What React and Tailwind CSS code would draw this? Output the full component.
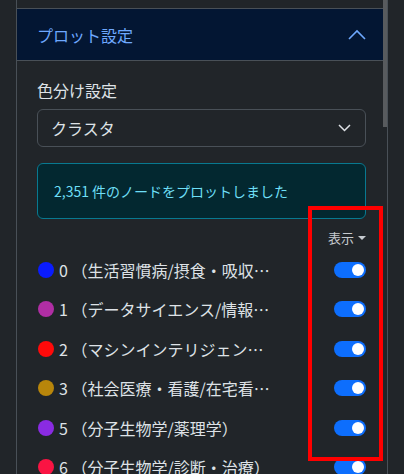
const clusters = [
  { id: 0, color: "#0a1cff", label: "0 （生活習慣病/摂食・吸収…" },
  { id: 1, color: "#b02ea4", label: "1 （データサイエンス/情報…" },
  { id: 2, color: "#ff0a0a", label: "2 （マシンインテリジェン…" },
  { id: 3, color: "#b8860b", label: "3 （社会医療・看護/在宅看…" },
  { id: 5, color: "#8a2be2", label: "5 （分子生物学/薬理学）" },
  { id: 6, color: "#fa1443", label: "6 （分子生物学/診断・治療）" },
];

function Toggle() {
  return (
    <span className="flex h-4 w-8 items-center justify-end rounded-full bg-[#0d6efd] pr-[2px]">
      <span className="h-3 w-3 rounded-full bg-white" />
    </span>
  );
}

export default function App() {
  return (
    <div
      className="relative flex h-[474px] w-[404px] overflow-hidden bg-[#212529] text-[#dee2e6]"
      style={{ fontFamily: '"Noto Sans CJK JP", "Noto Sans", sans-serif' }}
    >
      <div className="w-4 shrink-0" />
      <div className="flex w-[372px] shrink-0 border-x border-[#495057]">
        <div className="w-[366px] shrink-0">
          <div className="h-2" />
          <div className="border-y border-[#495057]">
            <div className="flex h-[51px] items-center justify-between bg-[#031633] pl-5 pr-[17px]">
              <span className="text-base text-[#6ea8fe]">プロット設定</span>
              <svg width="18" height="11" viewBox="0 0 18 11" fill="none">
                <polyline points="1,10 9,2 17,10" stroke="#6ea8fe" strokeWidth="1.6" />
              </svg>
            </div>
          </div>

          <div className="pl-5 pr-[17px] pt-[17px]">
            <div className="mb-[7px] h-6 text-base leading-6">色分け設定</div>
            <div className="flex h-[38px] items-center justify-between rounded-md border border-[#495057] pl-[13px] pr-[14px]">
              <span className="text-base">クラスタ</span>
              <svg width="13" height="8" viewBox="0 0 13 8" fill="none">
                <polyline points="1,1 6.5,6.5 12,1" stroke="#dee2e6" strokeWidth="1.5" />
              </svg>
            </div>

            <div className="mt-4 flex h-14 items-center rounded-md border border-[#087990] bg-[#032830] pl-4 text-sm text-[#6edff6]">
              2,351 件のノードをプロットしました
            </div>

            <div className="mt-[9px] flex h-5 items-center justify-end text-[13px] text-[#c6cacf]">
              表示
              <span className="ml-[4px] h-0 w-0 border-x-4 border-t-4 border-x-transparent border-t-[#c6cacf]" />
            </div>

            <div className="mt-[2px]">
              {clusters.map((c) => (
                <div key={c.id} className="flex h-[39.5px] items-center justify-between">
                  <div className="flex items-center">
                    <span className="ml-px mr-[5px] h-4 w-4 rounded-full" style={{ backgroundColor: c.color }} />
                    <span className="whitespace-nowrap text-base">{c.label}</span>
                  </div>
                  <Toggle />
                </div>
              ))}
            </div>
          </div>
        </div>
        <div className="w-1 shrink-0">
          <div className="h-[127px] bg-white/25" />
        </div>
      </div>

      <div className="pointer-events-none absolute left-[308px] top-[206px] h-[255px] w-[75px] border-4 border-[#ff0000]" />
    </div>
  );
}
